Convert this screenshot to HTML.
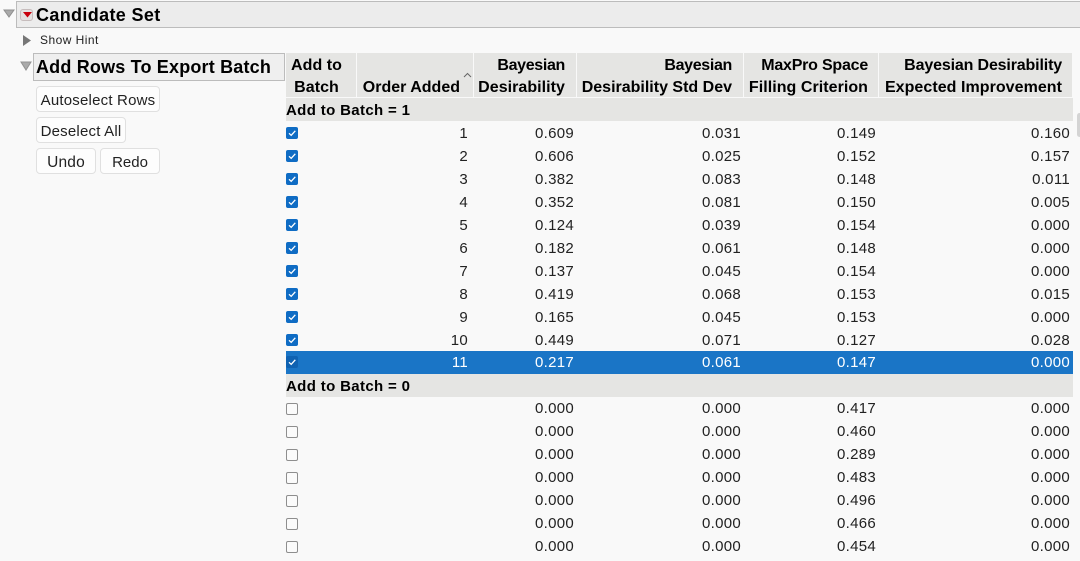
<!DOCTYPE html>
<html><head><meta charset="utf-8"><style>
html,body{margin:0;padding:0}
body{width:1080px;height:561px;overflow:hidden;background:#f9f9f9;position:relative;font-family:"Liberation Sans",sans-serif;color:#111}
.a{position:absolute;white-space:nowrap}
.b{font-weight:bold}
.h{position:absolute;background:#e5e5e3;top:53px;height:44px}
.ht{position:absolute;white-space:nowrap;font-weight:bold;font-size:16px;line-height:22px;letter-spacing:.05px;text-align:right;color:#000}
.btn{position:absolute;background:#fdfdfd;border:1px solid #e0e0e0;border-radius:4px;box-sizing:border-box;height:26px;font-size:15px;line-height:28px;text-align:center;white-space:nowrap;color:#222;letter-spacing:.2px}
.g{position:absolute;left:286px;width:787px;height:23px;background:#e5e5e3;font-weight:bold;font-size:15px;line-height:25px;letter-spacing:.35px;color:#000}
.r{position:absolute;left:286px;width:787px;height:23px;font-size:15px;line-height:23px;color:#222}
.r span{position:absolute;top:0;letter-spacing:.3px}
.r .n{right:605px}
.r .v1{right:499px}
.r .v2{right:332px}
.r .v3{right:197px}
.r .v4{right:3px}
.s{position:absolute;left:0;top:5px;width:12px;height:12px;background:#0f6cc4;border-radius:2px}
.u{position:absolute;left:0;top:6px;width:10px;height:10px;border:1px solid #8e8e8e;border-radius:2px;background:#fbfbfb}
.s svg{position:absolute;left:0;top:0}
.sel{background:#1a75c6;color:#fff}
.sel .s{background:#0f62b2}
</style></head><body>
<!-- title bar -->
<div class="a" style="left:16px;top:1px;width:1070px;height:27px;background:#ececec;border:1px solid #bcbcbc;box-sizing:border-box"></div>
<svg class="a" style="left:3px;top:9px" width="12" height="9"><path d="M1 1H11L6 8Z" fill="#aaa" stroke="#8f8f8f"/></svg>
<div class="a" style="left:20px;top:9px;width:11px;height:10px;background:#e4e0e0;border:1px solid #c6bcbc;border-radius:3px"></div>
<svg class="a" style="left:23px;top:12px" width="9" height="6"><path d="M0 0H9L4.500 5.500Z" fill="#c8000c"/></svg>
<div class="a b" style="left:36px;top:3px;font-size:18px;line-height:24px;letter-spacing:.35px;color:#000">Candidate Set</div>
<!-- hint -->
<svg class="a" style="left:23px;top:35px" width="8" height="11"><path d="M0 0L8 5.500L0 11Z" fill="#777"/></svg>
<div class="a" style="left:40px;top:32px;font-size:12px;line-height:17px;letter-spacing:.45px;color:#222">Show Hint</div>
<!-- outline -->
<svg class="a" style="left:20px;top:61px" width="12" height="10"><path d="M1 1H11L6 9Z" fill="#aaa" stroke="#929292"/></svg>
<div class="a" style="left:33px;top:53px;width:252px;height:28px;background:#efefef;border:1px solid #bcbcbc;box-sizing:border-box"></div>
<div class="a b" style="left:36px;top:54px;font-size:18px;line-height:26px;letter-spacing:.18px;color:#000">Add Rows To Export Batch</div>
<div class="btn" style="left:36px;top:86px;width:124px">Autoselect Rows</div>
<div class="btn" style="left:36px;top:117px;width:90px">Deselect All</div>
<div class="btn" style="left:36px;top:148px;width:60px;line-height:27px;font-size:15.500px">Undo</div>
<div class="btn" style="left:100px;top:148px;width:60px;line-height:27px;font-size:15px;letter-spacing:0">Redo</div>
<!-- headers -->
<div class="h" style="left:286px;width:70px"></div>
<div class="h" style="left:357px;width:116px"></div>
<div class="h" style="left:474px;width:102px"></div>
<div class="h" style="left:577px;width:166px"></div>
<div class="h" style="left:744px;width:134px"></div>
<div class="h" style="left:879px;width:193px"></div>
<div class="ht" style="left:291px;top:55px;text-align:center;width:51px">Add to<br>Batch</div>
<div class="ht" style="right:620px;top:77px;letter-spacing:0">Order Added</div>
<svg class="a" style="left:463px;top:72px" width="10" height="6"><path d="M1 5L4.500 1.500L8 5" fill="none" stroke="#666"/></svg>
<div class="ht" style="right:515px;top:55px"><span style="letter-spacing:-.33px">Bayesian</span><br>Desirability</div>
<div class="ht" style="right:348px;top:55px"><span style="letter-spacing:-.33px">Bayesian</span><br><span style="letter-spacing:0">Desirability Std Dev</span></div>
<div class="ht" style="right:212px;top:55px"><span style="letter-spacing:-.22px">MaxPro Space</span><br>Filling Criterion</div>
<div class="ht" style="right:18px;top:55px"><span style="letter-spacing:-.15px">Bayesian Desirability</span><br>Expected Improvement</div>
<div class="g" style="top:98px"><span>Add to Batch = 1</span></div>
<div class="g" style="top:374px"><span>Add to Batch = 0</span></div>
<div class="a" style="left:1077px;top:113px;width:5px;height:24px;background:#d4d4d4;border-radius:3px"></div>
<div class="r" style="top:122px"><i class="s"><svg width="12" height="12"><path d="M3 6.300L5.200 8.300L9.300 3.800" fill="none" stroke="#fff" stroke-width="1.300"/></svg></i><span class="n">1</span><span class="v1">0.609</span><span class="v2">0.031</span><span class="v3">0.149</span><span class="v4">0.160</span></div>
<div class="r" style="top:145px"><i class="s"><svg width="12" height="12"><path d="M3 6.300L5.200 8.300L9.300 3.800" fill="none" stroke="#fff" stroke-width="1.300"/></svg></i><span class="n">2</span><span class="v1">0.606</span><span class="v2">0.025</span><span class="v3">0.152</span><span class="v4">0.157</span></div>
<div class="r" style="top:168px"><i class="s"><svg width="12" height="12"><path d="M3 6.300L5.200 8.300L9.300 3.800" fill="none" stroke="#fff" stroke-width="1.300"/></svg></i><span class="n">3</span><span class="v1">0.382</span><span class="v2">0.083</span><span class="v3">0.148</span><span class="v4">0.011</span></div>
<div class="r" style="top:191px"><i class="s"><svg width="12" height="12"><path d="M3 6.300L5.200 8.300L9.300 3.800" fill="none" stroke="#fff" stroke-width="1.300"/></svg></i><span class="n">4</span><span class="v1">0.352</span><span class="v2">0.081</span><span class="v3">0.150</span><span class="v4">0.005</span></div>
<div class="r" style="top:214px"><i class="s"><svg width="12" height="12"><path d="M3 6.300L5.200 8.300L9.300 3.800" fill="none" stroke="#fff" stroke-width="1.300"/></svg></i><span class="n">5</span><span class="v1">0.124</span><span class="v2">0.039</span><span class="v3">0.154</span><span class="v4">0.000</span></div>
<div class="r" style="top:237px"><i class="s"><svg width="12" height="12"><path d="M3 6.300L5.200 8.300L9.300 3.800" fill="none" stroke="#fff" stroke-width="1.300"/></svg></i><span class="n">6</span><span class="v1">0.182</span><span class="v2">0.061</span><span class="v3">0.148</span><span class="v4">0.000</span></div>
<div class="r" style="top:260px"><i class="s"><svg width="12" height="12"><path d="M3 6.300L5.200 8.300L9.300 3.800" fill="none" stroke="#fff" stroke-width="1.300"/></svg></i><span class="n">7</span><span class="v1">0.137</span><span class="v2">0.045</span><span class="v3">0.154</span><span class="v4">0.000</span></div>
<div class="r" style="top:283px"><i class="s"><svg width="12" height="12"><path d="M3 6.300L5.200 8.300L9.300 3.800" fill="none" stroke="#fff" stroke-width="1.300"/></svg></i><span class="n">8</span><span class="v1">0.419</span><span class="v2">0.068</span><span class="v3">0.153</span><span class="v4">0.015</span></div>
<div class="r" style="top:306px"><i class="s"><svg width="12" height="12"><path d="M3 6.300L5.200 8.300L9.300 3.800" fill="none" stroke="#fff" stroke-width="1.300"/></svg></i><span class="n">9</span><span class="v1">0.165</span><span class="v2">0.045</span><span class="v3">0.153</span><span class="v4">0.000</span></div>
<div class="r" style="top:329px"><i class="s"><svg width="12" height="12"><path d="M3 6.300L5.200 8.300L9.300 3.800" fill="none" stroke="#fff" stroke-width="1.300"/></svg></i><span class="n">10</span><span class="v1">0.449</span><span class="v2">0.071</span><span class="v3">0.127</span><span class="v4">0.028</span></div>
<div class="r sel" style="top:351px"><i class="s"><svg width="12" height="12"><path d="M3 6.300L5.200 8.300L9.300 3.800" fill="none" stroke="#fff" stroke-width="1.300"/></svg></i><span class="n">11</span><span class="v1">0.217</span><span class="v2">0.061</span><span class="v3">0.147</span><span class="v4">0.000</span></div>
<div class="r" style="top:397px"><i class="u"></i><span class="v1">0.000</span><span class="v2">0.000</span><span class="v3">0.417</span><span class="v4">0.000</span></div>
<div class="r" style="top:420px"><i class="u"></i><span class="v1">0.000</span><span class="v2">0.000</span><span class="v3">0.460</span><span class="v4">0.000</span></div>
<div class="r" style="top:443px"><i class="u"></i><span class="v1">0.000</span><span class="v2">0.000</span><span class="v3">0.289</span><span class="v4">0.000</span></div>
<div class="r" style="top:466px"><i class="u"></i><span class="v1">0.000</span><span class="v2">0.000</span><span class="v3">0.483</span><span class="v4">0.000</span></div>
<div class="r" style="top:489px"><i class="u"></i><span class="v1">0.000</span><span class="v2">0.000</span><span class="v3">0.496</span><span class="v4">0.000</span></div>
<div class="r" style="top:512px"><i class="u"></i><span class="v1">0.000</span><span class="v2">0.000</span><span class="v3">0.466</span><span class="v4">0.000</span></div>
<div class="r" style="top:535px"><i class="u"></i><span class="v1">0.000</span><span class="v2">0.000</span><span class="v3">0.454</span><span class="v4">0.000</span></div>
</body></html>
